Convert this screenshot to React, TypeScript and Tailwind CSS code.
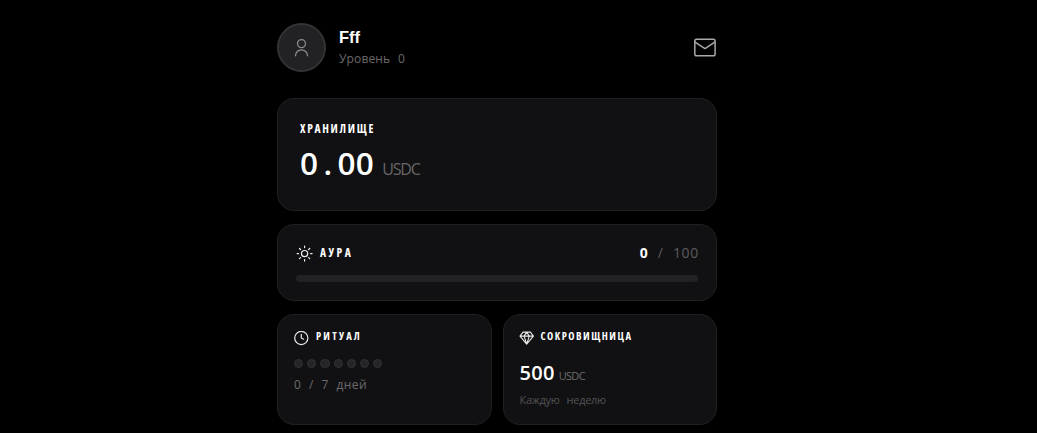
import React from 'react';

const mono = "font-[family-name:'Droid_Sans_Mono','Open_Sans','Noto_Sans',monospace]";
const card = 'bg-[#111113] border border-[#202022] rounded-[17px]';

function UserIcon() {
  return (
    <svg width="20" height="20" viewBox="0 0 20 20" fill="none" stroke="#8a8a8c" strokeWidth="1.3" strokeLinecap="round">
      <circle cx="9.5" cy="5.6" r="4" />
      <path d="M3.5 17.8c0-3.4 2.6-6 6-6s6 2.6 6 6" />
    </svg>
  );
}

function MailIcon() {
  return (
    <svg width="24" height="20" viewBox="0 0 24 20" fill="none" stroke="#a9a9a9" strokeWidth="1.5" strokeLinecap="round" strokeLinejoin="round">
      <rect x="1.8" y="1.3" width="20.3" height="16.4" rx="1.8" />
      <path d="M2 4.2l10 6.4 9.8-6.4" />
    </svg>
  );
}

function SunIcon() {
  return (
    <svg width="18" height="18" viewBox="0 0 18 18" fill="none" stroke="#f0f0f0" strokeWidth="1.2" strokeLinecap="round">
      <circle cx="8.6" cy="9.6" r="3.1" />
      <path d="M8.6 2.1v1.5M8.6 15.6v1.5M1.1 9.6h1.5M14.6 9.6h1.5M3.5 4.5l1 1M12.7 13.7l1 1M3.5 14.7l1-1M12.7 5.5l1-1" />
    </svg>
  );
}

function ClockIcon() {
  return (
    <svg width="16" height="16" viewBox="0 0 16 16" fill="none" stroke="#e8e8e8" strokeWidth="1.2" strokeLinecap="round" strokeLinejoin="round">
      <circle cx="7.3" cy="7" r="6.6" />
      <path d="M7.3 3.4V7l2.3 1.2" />
    </svg>
  );
}

function GemIcon() {
  return (
    <svg className="overflow-visible" width="16" height="16" viewBox="0 0 16 16" fill="none" stroke="#e8e8e8" strokeWidth="1.1" strokeLinejoin="round">
      <path d="M3 1.1h7.4l3 4L6.7 13.2 0 5.1zM0 5.1h13.4M6.7 1.1L4.1 5.1l2.6 8.1 2.6-8.1z" />
    </svg>
  );
}

export default function App() {
  return (
    <div className="min-h-screen h-[433px] overflow-hidden bg-black text-white">
      <div className="ml-[277px] w-[440px] pt-[23px]">
        <header className="flex items-center h-[49px]">
          <div className="size-[49px] rounded-full bg-[#222224] border-2 border-[#333335] flex items-center justify-center">
            <UserIcon />
          </div>
          <div className="ml-[13px] flex-1">
            <div className="font-[family-name:'Liberation_Sans',sans-serif] text-[16.5px] leading-[20px] font-bold">Fff</div>
            <div className={`${mono} mt-[3px] text-xs leading-[18px] text-[#6b6b6b] tracking-[0.15px] [word-spacing:4.5px]`}>Уровень 0</div>
          </div>
          <MailIcon />
        </header>

        <section className={`${card} mt-[26px] h-[113px] px-[22px] pt-[22px]`}>
          <h2 className={`${mono} [font-stretch:75%] text-[11.5px] leading-4 font-bold tracking-[1.7px]`}>ХРАНИЛИЩЕ</h2>
          <div className={`${mono} flex items-baseline mt-[4px] leading-[44px]`}>
            <span className="text-[31.5px] font-semibold tracking-[0.4px]">
              0<span className="mx-[5px]">.</span>00
            </span>
            <span className="ml-[8px] text-base font-medium text-[#666] tracking-[-1.2px]">USDC</span>
          </div>
        </section>

        <section className={`${card} mt-[13px] h-[77px] px-[18px] pt-[19px]`}>
          <div className="flex items-center h-[18px]">
            <SunIcon />
            <h2 className={`${mono} [font-stretch:75%] ml-[6px] text-[11.5px] font-bold tracking-[2.5px]`}>АУРА</h2>
            <div className={`${mono} ml-auto -mr-px text-sm text-[#5c5c5c] tracking-[0.7px] [word-spacing:5px] font-medium`}>
              <span className="text-white font-bold">0</span> / 100
            </div>
          </div>
          <div className="mt-[13px] h-[7px] rounded-full bg-[#222224]" />
        </section>

        <div className="mt-[13px] grid grid-cols-2 gap-[11px]">
          <section className={`${card} h-[111px] px-4 pt-[13px]`}>
            <div className="flex h-[18px]">
              <div className="mt-[3px]"><ClockIcon /></div>
              <h2 className={`${mono} [font-stretch:75%] ml-[6px] text-[10.5px] leading-4 font-bold tracking-[2.2px]`}>РИТУАЛ</h2>
            </div>
            <div className="mt-[13px] flex gap-[4px]">
              {Array.from({ length: 7 }, (_, i) => (
                <div key={i} className="size-[9.2px] rounded-full bg-[#252527] border border-[#323234]" />
              ))}
            </div>
            <div className={`${mono} mt-[8px] text-xs leading-[18px] text-[#6b6b6b] tracking-[0.4px] [word-spacing:4.2px]`}>0 / 7 дней</div>
          </section>

          <section className={`${card} h-[111px] px-4 pt-[13px]`}>
            <div className="flex h-[18px]">
              <div className="mt-[3px]"><GemIcon /></div>
              <h2 className={`${mono} [font-stretch:75%] ml-[5px] text-[10.5px] leading-4 font-bold tracking-[1.5px]`}>СОКРОВИЩНИЦА</h2>
            </div>
            <div className={`${mono} flex items-baseline mt-[12px] leading-[30px]`}>
              <span className="text-[20px] font-semibold tracking-[0.3px]">500</span>
              <span className="ml-[4px] text-[11px] font-medium text-[#6b6b6b] tracking-[-0.7px]">USDC</span>
            </div>
            <div className={`${mono} mt-px text-[11px] leading-4 text-[#515153] tracking-[-0.3px] [word-spacing:4.5px]`}>Каждую неделю</div>
          </section>
        </div>
      </div>
    </div>
  );
}
